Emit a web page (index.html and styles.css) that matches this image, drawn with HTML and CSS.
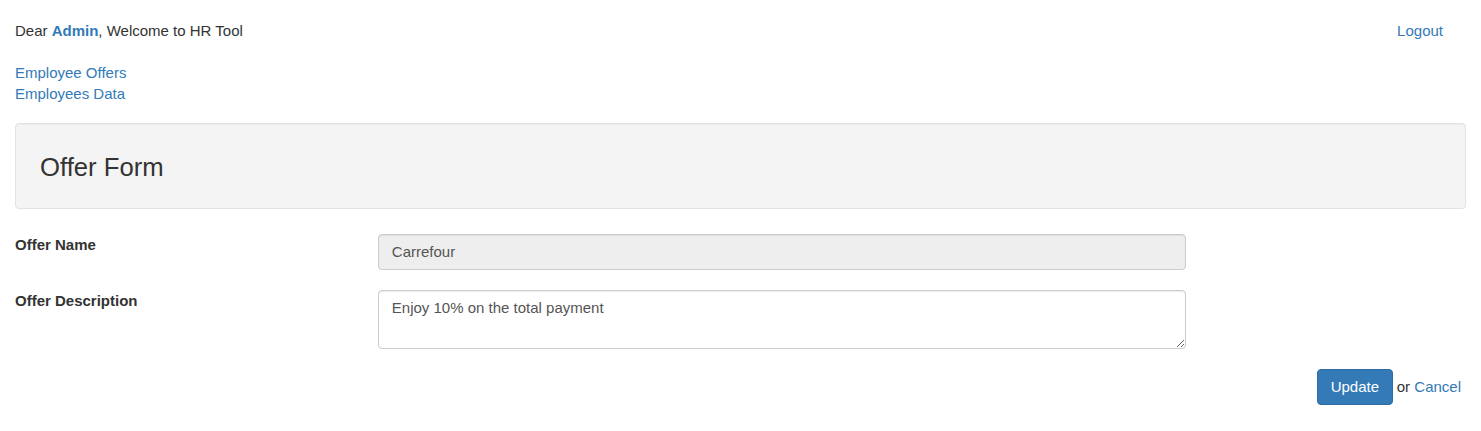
FILE: index.html
```html
<!DOCTYPE html>
<html lang="en">
<head>
<meta charset="utf-8">
<title>HR Tool - Offer Form</title>
<link rel="stylesheet" href="styles.css">
</head>
<body>
<div class="page">
  <header class="topbar">
    <div class="greeting">Dear <a class="user" href="#">Admin</a>, Welcome to HR Tool</div>
    <a class="logout" href="#">Logout</a>
  </header>
  <nav class="nav">
    <a href="#">Employee Offers</a>
    <a href="#">Employees Data</a>
  </nav>
  <div class="well">
    <h3 class="well-title">Offer Form</h3>
  </div>
  <form class="form">
    <div class="form-row">
      <label class="form-label" for="name">Offer Name</label>
      <div class="form-field">
        <input class="form-control readonly" id="name" type="text" value="Carrefour" readonly>
      </div>
    </div>
    <div class="form-row">
      <label class="form-label" for="desc">Offer Description</label>
      <div class="form-field">
        <textarea class="form-control textarea" id="desc" rows="2">Enjoy 10% on the total payment</textarea>
      </div>
    </div>
    <div class="actions">
      <button class="btn-primary" type="button">Update</button>
      <span class="or">&nbsp;or <a href="#">Cancel</a></span>
    </div>
  </form>
</div>
</body>
</html>
```

FILE: styles.css
```css
html, body {
  margin: 0;
  padding: 0;
  background: #fff;
}

body {
  font-family: "Liberation Sans", Arial, Helvetica, sans-serif;
  font-size: 15px;
  line-height: 21.4px;
  color: #333;
}

a {
  color: #337ab7;
  text-decoration: none;
}

.page {
  padding: 20px 15px 0 15px;
}

.topbar {
  display: flex;
  justify-content: space-between;
  align-items: flex-start;
}

.user {
  font-weight: bold;
}

.logout {
  margin-right: 23px;
}

.nav {
  display: flex;
  flex-direction: column;
  align-items: flex-start;
  margin-top: 21px;
  line-height: 21px;
}

.well {
  margin-top: 19px;
  background: #f4f4f4;
  border: 1px solid #e3e3e3;
  border-radius: 4px;
  padding: 29px 24px 26px 24px;
  box-shadow: inset 0 1px 1px rgba(0, 0, 0, 0.03);
}

.well-title {
  margin: 0;
  font-size: 25.7px;
  font-weight: normal;
  line-height: 1.1;
  color: #333;
}

.form {
  margin-top: 25px;
}

.form-row {
  display: flex;
  align-items: flex-start;
  margin-bottom: 20px;
}

.form-label {
  flex: 0 0 363px;
  font-weight: bold;
  padding-top: 0;
}

.form-field {
  flex: 0 0 808px;
}

.form-control {
  display: block;
  box-sizing: border-box;
  width: 100%;
  margin: 0;
  font-family: "Liberation Sans", Arial, Helvetica, sans-serif;
  font-size: 15px;
  line-height: 21.4px;
  color: #555;
  background: #fff;
  border: 1px solid #ccc;
  border-radius: 4px;
  padding: 6.4px 12.8px;
  box-shadow: inset 0 1px 1px rgba(0, 0, 0, 0.075);
  outline: none;
}

.readonly {
  height: 36.4px;
  background: #eee;
}

.textarea {
  height: 58.5px;
  resize: vertical;
  padding-top: 6px;
}

.actions {
  display: flex;
  justify-content: flex-end;
  align-items: center;
  margin-top: 0;
  padding-right: 5px;
}

.btn-primary {
  font-family: "Liberation Sans", Arial, Helvetica, sans-serif;
  font-size: 15px;
  line-height: 21.4px;
  height: 36.7px;
  color: #fff;
  background: #337ab7;
  border: 1px solid #2e6da4;
  border-radius: 4px;
  padding: 6.4px 12.6px;
  margin: 0;
  cursor: pointer;
}
```
